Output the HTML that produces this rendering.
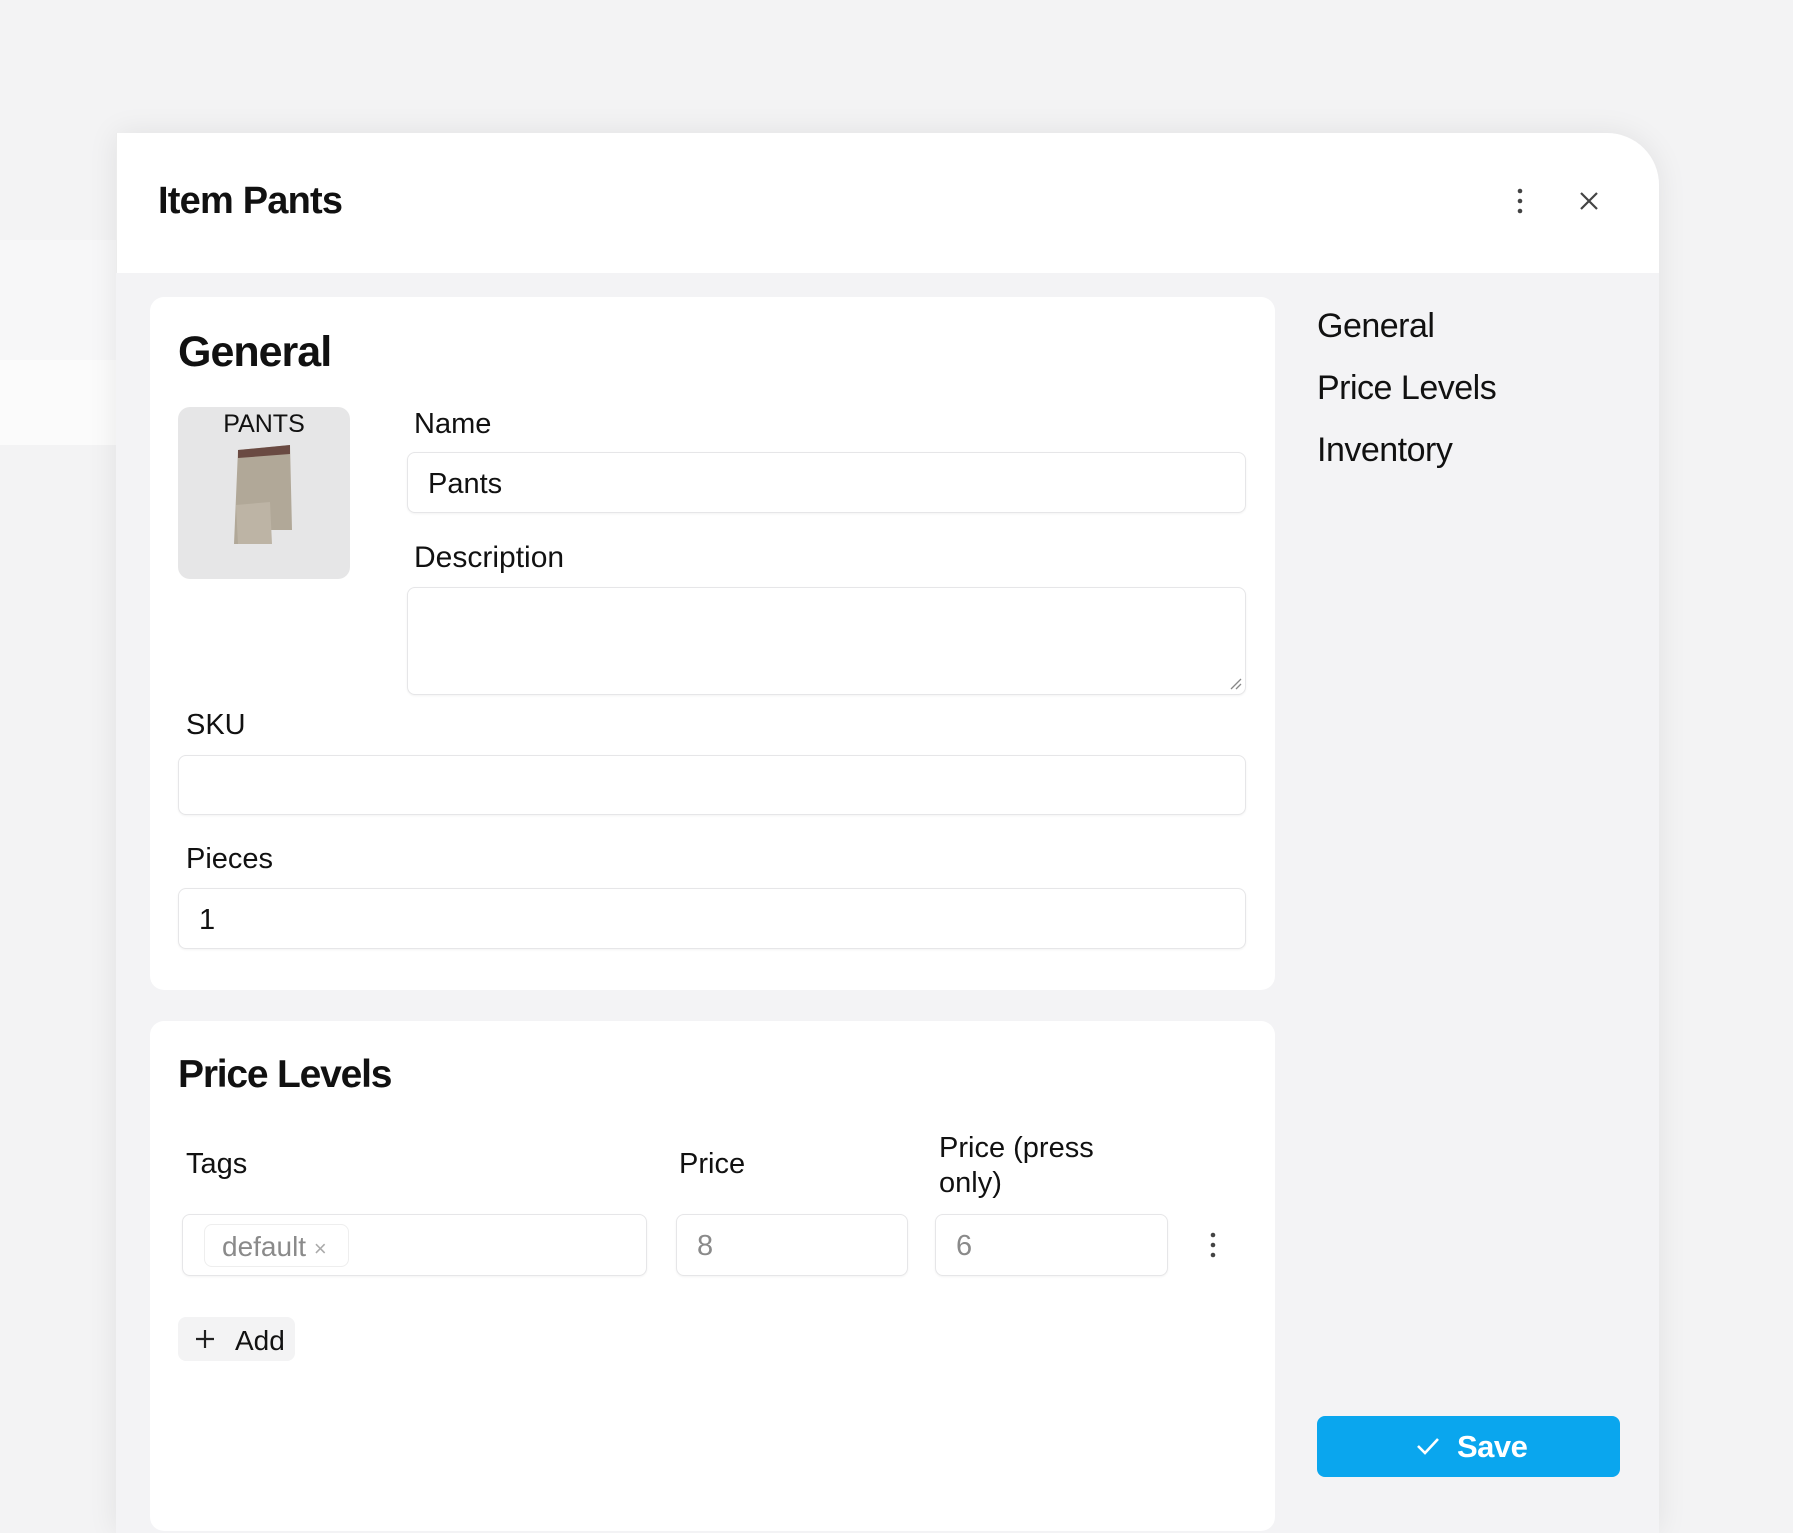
<!DOCTYPE html>
<html><head><style>
*{box-sizing:border-box;margin:0;padding:0}
body{width:1793px;height:1517px;background:#f3f3f4;position:relative;overflow:hidden;font-family:"Liberation Sans",sans-serif;color:#111}
.a{position:absolute}
.inp{position:absolute;background:#fff;border:1px solid #e6e6e8;border-radius:8px;box-shadow:0 1px 2px rgba(0,0,0,.05)}
.lbl{position:absolute;font-size:29px;line-height:1}
</style></head><body>
<div class="a" style="left:0;top:240px;width:116px;height:120px;background:#f7f7f8"></div>
<div class="a" style="left:0;top:360px;width:116px;height:85px;background:#fbfbfb"></div>
<div class="a" style="left:116px;top:133px;width:1543px;height:1400px;background:#f3f3f5;border-top-right-radius:52px;box-shadow:0 0 30px rgba(0,0,0,.08);overflow:hidden">
  <div class="a" style="left:0;top:0;width:1543px;height:140px;background:#fff;border-left:1px solid #ececec"></div>
</div>
<div class="a" style="left:158px;top:180px;font-size:38px;font-weight:bold;letter-spacing:-0.8px">Item Pants</div>
<svg class="a" style="left:1510px;top:186px" width="20" height="30"><circle cx="10" cy="5" r="2.3" fill="#444"/><circle cx="10" cy="15" r="2.3" fill="#444"/><circle cx="10" cy="25" r="2.3" fill="#444"/></svg>
<svg class="a" style="left:1578px;top:190px" width="22" height="22"><path d="M3 3L19 19M19 3L3 19" stroke="#444" stroke-width="2.2"/></svg>

<div class="a" style="left:150px;top:297px;width:1125px;height:693px;background:#fff;border-radius:14px"></div>
<div class="a" style="left:178px;top:328px;font-size:43px;font-weight:bold;letter-spacing:-1px">General</div>
<div class="a" style="left:178px;top:407px;width:172px;height:172px;background:#e6e6e7;border-radius:12px"></div>
<div class="a" style="left:178px;top:410px;width:172px;text-align:center;font-size:25px">PANTS</div>
<svg class="a" style="left:230px;top:440px" width="70" height="110"><path d="M8 10L60 5L62 90L40 90L40 64L12 66L14 104L4 104Z" fill="#b1a898"/><path d="M8 10L60 5L60 14L8 18Z" fill="#6a4a42"/><path d="M6 65L40 62L42 104L8 104Z" fill="#bdb4a5"/></svg>

<div class="lbl" style="left:414px;top:410px">Name</div>
<div class="inp" style="left:407px;top:452px;width:839px;height:61px"></div>
<div class="a" style="left:428px;top:468px;font-size:29px">Pants</div>
<div class="lbl" style="left:414px;top:543px;font-size:30px">Description</div>
<div class="inp" style="left:407px;top:587px;width:839px;height:108px"></div>
<svg class="a" style="left:1230px;top:678px" width="12" height="12"><path d="M11 1L1 11M11 6L6 11" stroke="#888" stroke-width="1.3"/></svg>
<div class="lbl" style="left:186px;top:711px">SKU</div>
<div class="inp" style="left:178px;top:755px;width:1068px;height:60px"></div>
<div class="lbl" style="left:186px;top:845px">Pieces</div>
<div class="inp" style="left:178px;top:888px;width:1068px;height:61px"></div>
<div class="a" style="left:199px;top:904px;font-size:29px">1</div>

<div class="a" style="left:150px;top:1021px;width:1125px;height:510px;background:#fff;border-radius:14px"></div>
<div class="a" style="left:178px;top:1053px;font-size:39px;font-weight:bold;letter-spacing:-1.2px">Price Levels</div>
<div class="lbl" style="left:186px;top:1150px">Tags</div>
<div class="lbl" style="left:679px;top:1150px">Price</div>
<div class="lbl" style="left:939px;top:1131px;line-height:35px">Price (press<br>only)</div>
<div class="inp" style="left:182px;top:1214px;width:465px;height:62px"></div>
<div class="a" style="left:204px;top:1224px;width:145px;height:43px;border:1px solid #eee;border-radius:8px;background:#fff"></div>
<div class="a" style="left:222px;top:1231px;font-size:28px;color:#8a8a8a">default <span style="font-size:22px;color:#aaa">×</span></div>
<div class="inp" style="left:676px;top:1214px;width:232px;height:62px"></div>
<div class="a" style="left:697px;top:1230px;font-size:29px;color:#8a8a8a">8</div>
<div class="inp" style="left:935px;top:1214px;width:233px;height:62px"></div>
<div class="a" style="left:956px;top:1230px;font-size:29px;color:#8a8a8a">6</div>
<svg class="a" style="left:1203px;top:1231px" width="20" height="28"><circle cx="10" cy="4" r="2.3" fill="#444"/><circle cx="10" cy="14" r="2.3" fill="#444"/><circle cx="10" cy="24" r="2.3" fill="#444"/></svg>
<div class="a" style="left:178px;top:1317px;width:117px;height:44px;background:#f3f3f4;border-radius:8px"></div>
<svg class="a" style="left:194px;top:1328px" width="22" height="22"><path d="M11 2V20M2 11H20" stroke="#222" stroke-width="2.2"/></svg>
<div class="a" style="left:235px;top:1325px;font-size:28px">Add</div>

<div class="a" style="left:1317px;top:307px;font-size:34px;letter-spacing:-0.5px">General</div>
<div class="a" style="left:1317px;top:369px;font-size:34px;letter-spacing:-0.5px">Price Levels</div>
<div class="a" style="left:1317px;top:431px;font-size:34px;letter-spacing:-0.5px">Inventory</div>

<div class="a" style="left:1317px;top:1416px;width:303px;height:61px;background:#0aa6ee;border-radius:8px"></div>
<svg class="a" style="left:1416px;top:1435px" width="24" height="22"><path d="M2 11L9 18L22 4" stroke="#fff" stroke-width="2.6" fill="none"/></svg>
<div class="a" style="left:1457px;top:1429px;font-size:31px;font-weight:bold;color:#fff;letter-spacing:-0.5px">Save</div>
</body></html>
